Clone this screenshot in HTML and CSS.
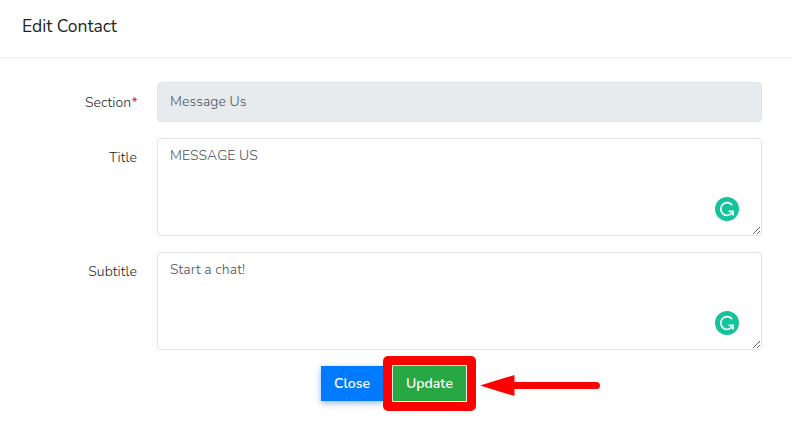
FILE: index.html
```
<!DOCTYPE html>
<html lang="en">
<head>
<meta charset="utf-8">
<title>Edit Contact</title>
<link rel="stylesheet" href="styles.css">
</head>
<body>
<header class="header"><h1 class="heading">Edit Contact</h1></header>
<form class="form">
  <div class="row">
    <label class="label label-section" for="section">Section<span class="required">*</span></label>
    <input class="control" id="section" value="Message Us" disabled>
  </div>
  <div class="row">
    <label class="label" for="title">Title</label>
    <div class="area">
      <textarea class="control" id="title" spellcheck="false">MESSAGE US</textarea>
      <svg class="badge" viewBox="0 0 24 24"><circle cx="12" cy="12" r="12" fill="#15c39a"/><path d="M17.1 8.1A6.35 6.35 0 1 0 18 14.4H13.6M18 14.4V18.6" fill="none" stroke="#fff" stroke-width="1.7"/></svg>
    </div>
  </div>
  <div class="row">
    <label class="label" for="subtitle">Subtitle</label>
    <div class="area">
      <textarea class="control" id="subtitle" spellcheck="false">Start a chat!</textarea>
      <svg class="badge" viewBox="0 0 24 24"><circle cx="12" cy="12" r="12" fill="#15c39a"/><path d="M17.1 8.1A6.35 6.35 0 1 0 18 14.4H13.6M18 14.4V18.6" fill="none" stroke="#fff" stroke-width="1.7"/></svg>
    </div>
  </div>
  <div class="actions">
    <button class="button close" type="button">Close</button>
    <div class="highlight"><button class="button update" type="button">Update</button></div>
    <svg class="arrow" viewBox="0 0 121 22"><path d="M0 10.5 34.5 0V21Z" fill="red"/><path d="M33 10.5H116.5" stroke="red" stroke-width="7" stroke-linecap="round"/></svg>
  </div>
</form>
</body>
</html>
```
FILE: styles.css
```
* { box-sizing: border-box; }
body {
  margin: 0;
  height: 421px;
  overflow: hidden;
  background: #fff;
  color: #212529;
  font: 350 14px/21px Nunito, Lato, sans-serif;
  letter-spacing: .08px;
}
.header {
  height: 58px;
  width: 791px;
  padding: 14px 22px;
  border-bottom: 1px solid #ebedef;
}
.heading { margin: 0; font-size: 17.5px; line-height: 24px; font-weight: 370; letter-spacing: -.06px; }
.form { padding: 24px 31px 0 22px; }
.row { display: grid; grid-template-columns: 115px 605px; column-gap: 20px; margin-bottom: 16px; }
.label { padding-top: 9px; text-align: right; white-space: nowrap; }
.label-section { padding-top: 10px; margin-right: -1px; }
.required { margin-left: .5px; color: #f0201c; font-weight: 400; }
.control {
  display: block;
  width: 100%;
  margin: 0;
  padding: 6px 12px 8px;
  border: 1px solid #e1e3e5;
  border-radius: 4px;
  outline: 0;
  background: #fff;
  color: #495057;
  font: inherit;
  letter-spacing: inherit;
}
input.control { height: 40px; background: #e8ebee; color: #495057; }
textarea.control { height: 98px; resize: both; }
.area { position: relative; }
.badge { position: absolute; right: 23px; top: 59px; width: 24px; height: 24px; }
.actions { display: flex; align-items: center; margin-top: -10px; padding-left: 299px; height: 55px; }
.button {
  height: 35px;
  margin: 0;
  padding: 0;
  border: 0;
  color: #fff;
  font: 600 14px/35px Nunito, Lato, sans-serif;
}
.close { width: 62px; background: #007bff; box-shadow: 0 2px 6px rgba(57, 101, 235, .5); }
.highlight { position: relative; flex: none; width: 93px; height: 55px; border: 9px solid red; border-radius: 5px; }
.update { display: block; width: 75px; height: 37px; border: 1px solid #dff2e3; background: #28a745; }
.arrow { width: 121px; height: 22px; margin: 5px 0 0 4px; }
```
